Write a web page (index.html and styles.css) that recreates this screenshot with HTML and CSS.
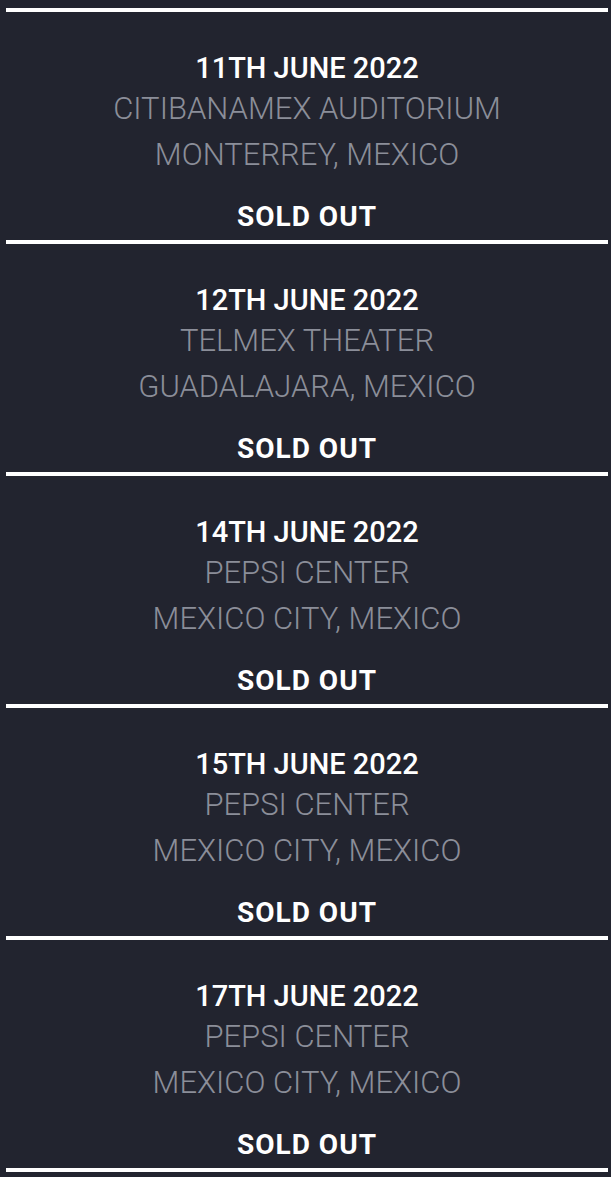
FILE: index.html
```html
<!DOCTYPE html>
<html lang="en">
<head>
    <meta charset="UTF-8">
    <meta name="viewport" content="width=device-width, initial-scale=1.0">
    <title>Tour Dates</title>
    <link rel="stylesheet" href="styles.css">
</head>
<body>
    <div class="tour-list">
        <div class="show">
            <div class="date">11TH JUNE 2022</div>
            <div class="venue">CITIBANAMEX AUDITORIUM</div>
            <div class="city">MONTERREY, MEXICO</div>
            <div class="status">SOLD OUT</div>
        </div>
        <div class="show">
            <div class="date">12TH JUNE 2022</div>
            <div class="venue">TELMEX THEATER</div>
            <div class="city">GUADALAJARA, MEXICO</div>
            <div class="status">SOLD OUT</div>
        </div>
        <div class="show">
            <div class="date">14TH JUNE 2022</div>
            <div class="venue">PEPSI CENTER</div>
            <div class="city">MEXICO CITY, MEXICO</div>
            <div class="status">SOLD OUT</div>
        </div>
        <div class="show">
            <div class="date">15TH JUNE 2022</div>
            <div class="venue">PEPSI CENTER</div>
            <div class="city">MEXICO CITY, MEXICO</div>
            <div class="status">SOLD OUT</div>
        </div>
        <div class="show">
            <div class="date">17TH JUNE 2022</div>
            <div class="venue">PEPSI CENTER</div>
            <div class="city">MEXICO CITY, MEXICO</div>
            <div class="status">SOLD OUT</div>
        </div>
    </div>
</body>
</html>
```

FILE: styles.css
```css
body {
    margin: 0;
    padding: 8px 3px 0 6px;
    background-color: #22242f;
    font-family: Roboto, "Liberation Sans", sans-serif;
}
.tour-list {
    width: 602px;
    border-bottom: 4px solid #ffffff;
}
.show {
    border-top: 4px solid #ffffff;
    padding: 38px 0 3px;
    text-align: center;
}
.date {
    color: #ffffff;
    font-size: 29px;
    font-weight: 500;
    line-height: 36px;
}
.venue, .city {
    color: #8b8e99;
    font-size: 31px;
    font-weight: 300;
    line-height: 46px;
}
.status {
    color: #ffffff;
    font-size: 28px;
    font-weight: 700;
    letter-spacing: 1px;
    line-height: 40px;
    margin-top: 19px;
}
```
